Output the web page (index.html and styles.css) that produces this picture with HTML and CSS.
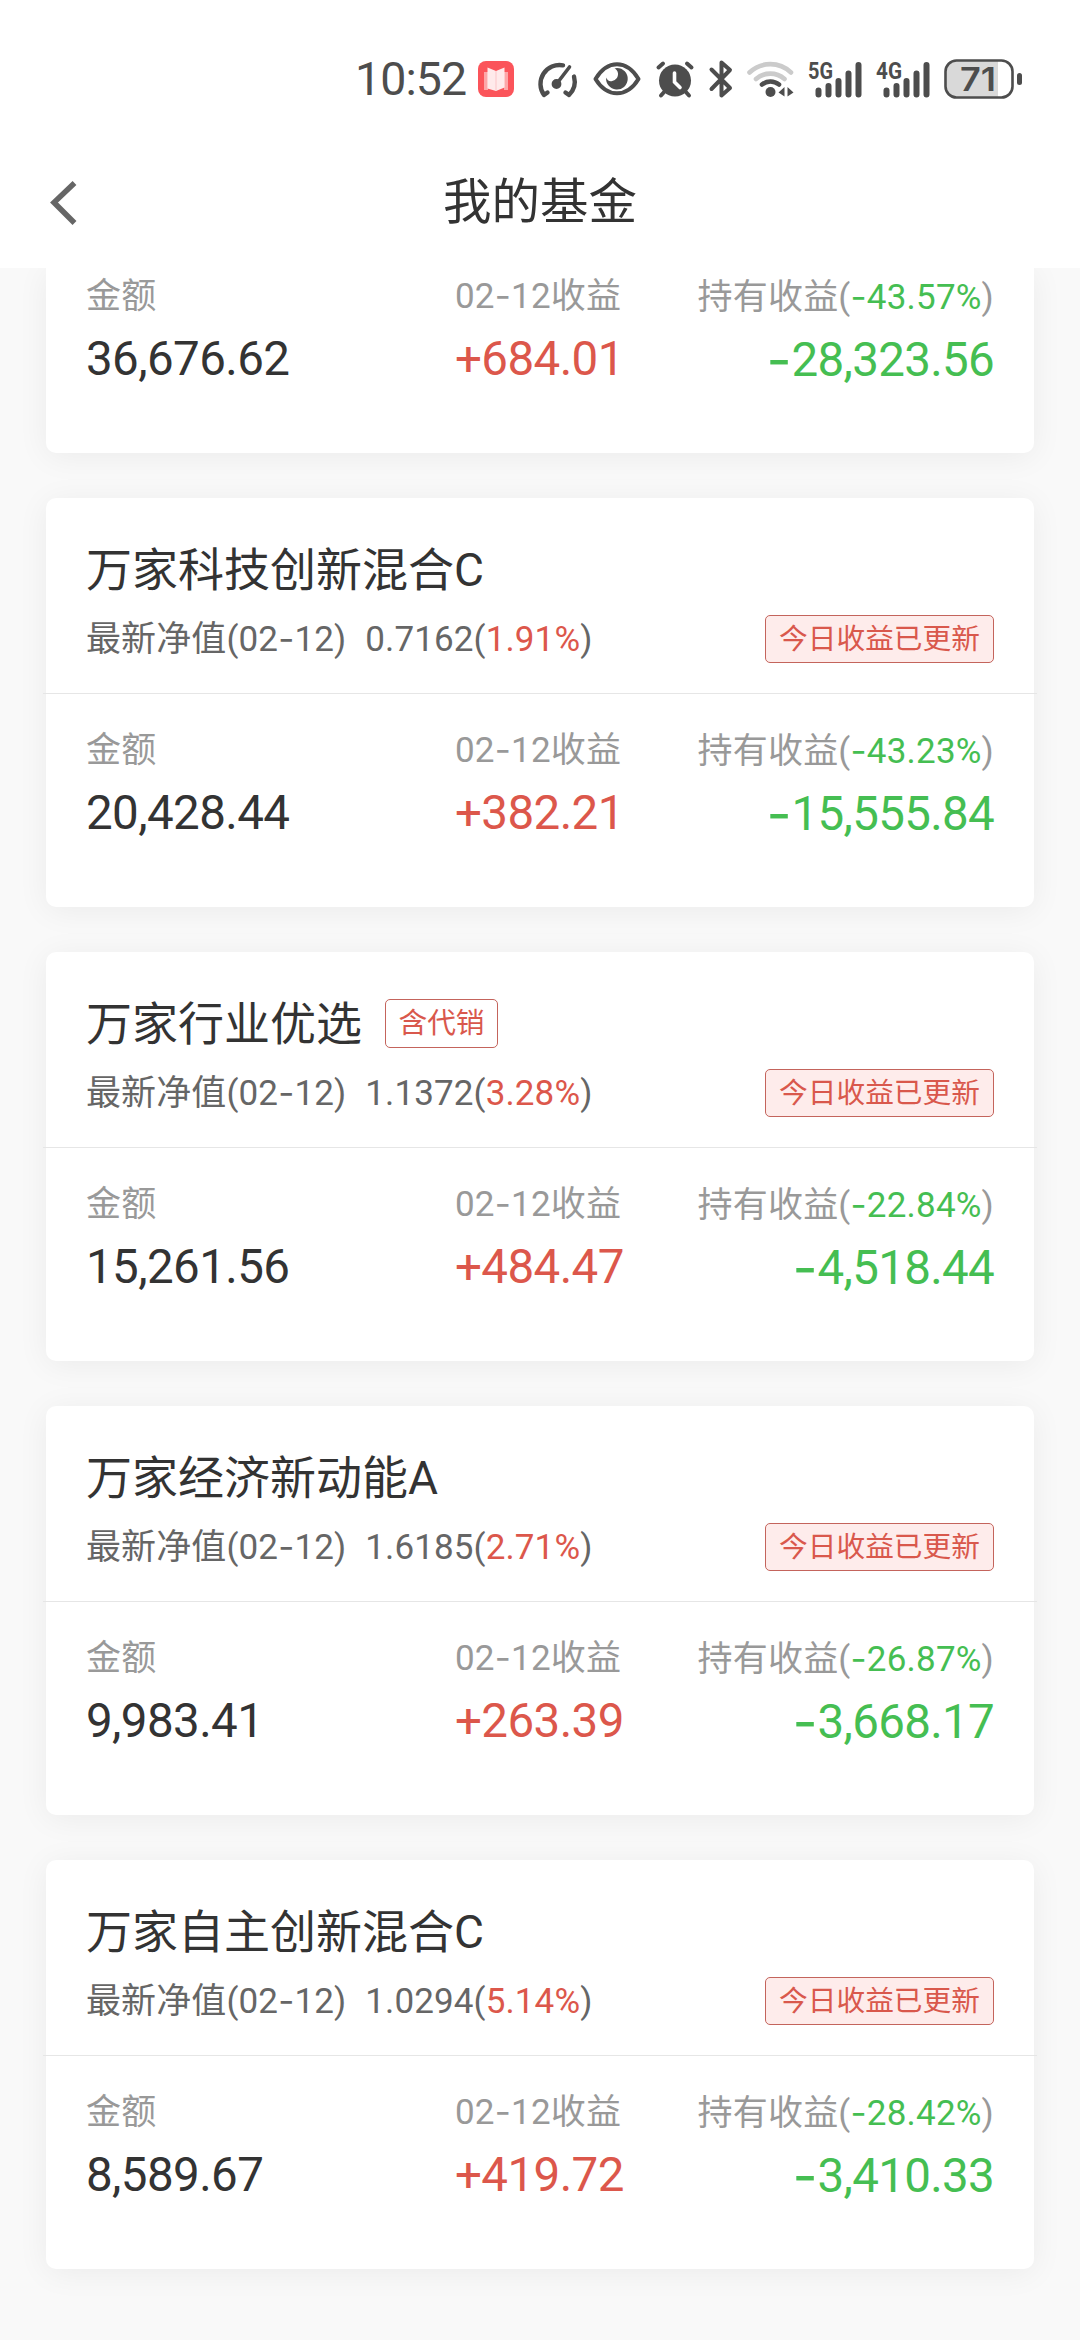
FILE: index.html
```html
<!DOCTYPE html>
<html lang="zh-CN">
<head>
<meta charset="utf-8">
<title>我的基金</title>
<link rel="stylesheet" href="styles.css">
</head>
<body>
<header class="top">
  <div class="status">
    <span class="clock">10:52</span>
    <svg class="app" width="36" height="36" viewBox="0 0 36 36"><rect width="36" height="36" rx="8" fill="#fb545a"/><path d="M6 11h4v18H6zM26 11h4v18h-4z" fill="#fda6a8"/><path d="M9.500 8.500V6.500L18 10l8.500-3.500v20L18 30l-8.500-2.500z" fill="#fff" opacity=".88"/><path d="M18 10v19" stroke="#fbc5c8" stroke-width="1"/></svg>
    <svg class="gauge" width="43" height="37" viewBox="0 0 43 37" fill="none" stroke="#4d4d4d" stroke-width="4.400" stroke-linecap="round"><path d="M28 4.300A19 19 0 0 0 9 34M9 34l3.500-2.500M34 34l-3.500-2.500M34 34a19 19 0 0 0 5-18.500"/><path d="M21.500 23L34.500 6" stroke-width="3.600"/><circle cx="21.500" cy="23" r="2.700" fill="#4d4d4d"/></svg>
    <svg class="eye" width="48" height="34" viewBox="0 0 48 34"><path d="M2.500 17C8 8 15 2.300 24 2.300S40 8 45.500 17C40 26 33 31.300 24 31.300S8 26 2.500 17z" fill="none" stroke="#4d4d4d" stroke-width="4" stroke-linejoin="round"/><path d="M24 6a10.800 10.800 0 1 1-10.800 9.500c1 3 3.300 4.200 6 3.500 4-1 6-4 5.800-7.500C24.800 9 23.500 7.500 21.500 6.500z" fill="#4d4d4d"/></svg>
    <svg class="alarm" width="38" height="37" viewBox="0 0 38 37" stroke="#4d4d4d" stroke-linecap="round"><circle cx="19" cy="19.500" r="16" fill="#4d4d4d" stroke="none"/><path d="M2.500 6.500l4.500-4M35.500 6.500l-4.500-4M9 30l-4 4.500M29 30l4 4.500" stroke-width="4"/><path d="M18.500 12v9l5.500 5.500" fill="none" stroke="#fff" stroke-width="3.600"/></svg>
    <svg class="bt" width="24" height="38" viewBox="0 0 24 38" fill="none" stroke="#4d4d4d" stroke-width="4" stroke-linecap="round" stroke-linejoin="round"><path d="M2.500 9.500L21 28l-8.500 7.500V2.500L21 10 2.500 29"/></svg>
    <svg class="wifi" width="47" height="38" viewBox="0 0 47 38" fill="none" stroke-width="4.600" stroke-linecap="round"><path d="M2.500 12.500a30 30 0 0 1 41.500 0M9 19a21.500 21.500 0 0 1 28.500 0" stroke="#cbcbcb"/><path d="M15 24.500a13.500 13.500 0 0 1 17 0" stroke="#4d4d4d"/><circle cx="23.500" cy="32" r="5" fill="#4d4d4d"/><path d="M31.500 32.500l6-5.500v9.500zM46.500 32.500l-6-5.500v9.500z" fill="#4d4d4d"/></svg>
    <svg class="sig" width="54" height="37" viewBox="0 0 54 37"><text x="0" y="18" textLength="25" lengthAdjust="spacingAndGlyphs" class="net">5G</text><g stroke="#4d4d4d" stroke-width="6" stroke-linecap="round"><path d="M10.500 29.500v4M20.500 25v8.500M30.500 20v13.500M40.500 12.500v21M50.500 4v29.500"/></g></svg>
    <svg class="sig" width="54" height="37" viewBox="0 0 54 37"><text x="0" y="18" textLength="26" lengthAdjust="spacingAndGlyphs" class="net">4G</text><g stroke="#4d4d4d" stroke-width="6" stroke-linecap="round"><path d="M10.500 29.500v4M20.500 25v8.500M30.500 20v13.500M40.500 12.500v21M50.500 4v29.500"/></g></svg>
    <svg class="bat" width="78" height="40" viewBox="0 0 78 40"><path d="M13 2h41v36H13A11 11 0 0 1 2 27V13A11 11 0 0 1 13 2z" fill="#d9d9d9"/><rect x="1.500" y="1.500" width="67" height="37" rx="11" fill="none" stroke="#4d4d4d" stroke-width="2.600"/><rect x="73" y="14" width="5" height="12" rx="2.500" fill="#4d4d4d"/><text x="16" y="32" textLength="36" lengthAdjust="spacingAndGlyphs" class="pct">71</text></svg>
  </div>
  <nav class="nav">
    <svg class="back" width="28" height="46" viewBox="0 0 28 46"><path d="M24.500 3L4 22.500 24.500 43" fill="none" stroke="#666" stroke-width="5.500"/></svg>
    <h1>我的基金</h1>
  </nav>
</header>
<main class="list">
  <section class="card cut">
    <div class="stats">
      <div><p class="label">金额</p><p class="value">36,676.62</p></div>
      <div><p class="label">02<i>-</i>12收益</p><p class="value up">+684.01</p></div>
      <div class="hold"><p class="label">持有收益(<span class="down"><i>-</i>43.57%</span>)</p><p class="value down"><i>-</i>28,323.56</p></div>
    </div>
  </section>
  <section class="card">
    <div class="head">
      <h2>万家科技创新混合C</h2>
      <div class="nav-row"><p>最新净值(02<i>-</i>12)<span class="net-value">0.7162(<span class="up">1.91%</span>)</span></p><span class="badge">今日收益已更新</span></div>
    </div>
    <div class="stats">
      <div><p class="label">金额</p><p class="value">20,428.44</p></div>
      <div><p class="label">02<i>-</i>12收益</p><p class="value up">+382.21</p></div>
      <div class="hold"><p class="label">持有收益(<span class="down"><i>-</i>43.23%</span>)</p><p class="value down"><i>-</i>15,555.84</p></div>
    </div>
  </section>
  <section class="card">
    <div class="head">
      <h2>万家行业优选<span class="tag">含代销</span></h2>
      <div class="nav-row"><p>最新净值(02<i>-</i>12)<span class="net-value">1.1372(<span class="up">3.28%</span>)</span></p><span class="badge">今日收益已更新</span></div>
    </div>
    <div class="stats">
      <div><p class="label">金额</p><p class="value">15,261.56</p></div>
      <div><p class="label">02<i>-</i>12收益</p><p class="value up">+484.47</p></div>
      <div class="hold"><p class="label">持有收益(<span class="down"><i>-</i>22.84%</span>)</p><p class="value down"><i>-</i>4,518.44</p></div>
    </div>
  </section>
  <section class="card">
    <div class="head">
      <h2>万家经济新动能A</h2>
      <div class="nav-row"><p>最新净值(02<i>-</i>12)<span class="net-value">1.6185(<span class="up">2.71%</span>)</span></p><span class="badge">今日收益已更新</span></div>
    </div>
    <div class="stats">
      <div><p class="label">金额</p><p class="value">9,983.41</p></div>
      <div><p class="label">02<i>-</i>12收益</p><p class="value up">+263.39</p></div>
      <div class="hold"><p class="label">持有收益(<span class="down"><i>-</i>26.87%</span>)</p><p class="value down"><i>-</i>3,668.17</p></div>
    </div>
  </section>
  <section class="card">
    <div class="head">
      <h2>万家自主创新混合C</h2>
      <div class="nav-row"><p>最新净值(02<i>-</i>12)<span class="net-value">1.0294(<span class="up">5.14%</span>)</span></p><span class="badge">今日收益已更新</span></div>
    </div>
    <div class="stats">
      <div><p class="label">金额</p><p class="value">8,589.67</p></div>
      <div><p class="label">02<i>-</i>12收益</p><p class="value up">+419.72</p></div>
      <div class="hold"><p class="label">持有收益(<span class="down"><i>-</i>28.42%</span>)</p><p class="value down"><i>-</i>3,410.33</p></div>
    </div>
  </section>
</main>
</body>
</html>
```

FILE: styles.css
```css
* { box-sizing: border-box; margin: 0; padding: 0; }
body {
  width: 1080px;
  height: 2340px;
  overflow: hidden;
  display: flex;
  flex-direction: column;
  background: #f9f9f9;
  color: #333;
  font-family: Roboto, "Noto Sans CJK SC", sans-serif;
}
i { font-family: Inter, sans-serif; font-style: normal; line-height: 0; }

.top { height: 268px; background: #fff; flex: none; }
.status {
  height: 134px;
  padding: 24px 0 0 355px;
  display: flex;
  align-items: center;
}
.status svg { flex: none; overflow: visible; }
.clock {
  width: 123px;
  font-size: 46.5px;
  letter-spacing: -0.9px;
  color: #4d4d4d;
}
.gauge { margin-left: 21px; }
.eye { margin-left: 15px; }
.alarm { margin-left: 15px; }
.bt { margin-left: 15px; }
.wifi { margin-left: 14px; }
.sig { margin-left: 14px; }
.bat { margin-left: 14px; }
.net { font: 700 24px Roboto, sans-serif; fill: #4d4d4d; }
.pct { font: 600 33px Inter, sans-serif; fill: #4d4d4d; }

.nav {
  height: 134px;
  display: grid;
  grid-template-columns: 200px 1fr 200px;
  align-items: center;
}
.back { margin: 4px 0 0 50px; }
.nav h1 {
  padding-bottom: 7px;
  text-align: center;
  font-size: 48.5px;
  font-weight: 400;
}

.list { flex: 1; overflow: hidden; }
.card {
  width: 988px;
  height: 409px;
  margin: 0 auto 45px;
  background: #fff;
  border-radius: 10px;
  box-shadow: 0 4px 32px rgba(0, 0, 0, 0.06);
}
.cut { height: 185px; border-radius: 0 0 10px 10px; }
.head {
  height: 196px;
  margin: 0 -3px;
  padding: 38px 43px 0;
  border-bottom: 1px solid #e6e6e6;
}
.head h2 {
  height: 60px;
  display: flex;
  align-items: center;
  font-size: 46px;
  font-weight: 400;
}
.tag, .badge {
  border: 1px solid #c4645c;
  border-radius: 5px;
  color: #d9584c;
  font-size: 28.7px;
  line-height: 46px;
  text-align: center;
}
.tag { width: 113px; height: 49px; margin: 6px 0 0 23px; }
.badge { width: 229px; height: 48px; margin-top: 7px; background: #feeceb; }
.nav-row {
  height: 50px;
  margin-top: 14px;
  display: flex;
  align-items: center;
  justify-content: space-between;
  font-size: 35px;
  letter-spacing: 0.12px;
  color: #666;
}
.badge { letter-spacing: 0; }
.net-value { margin-left: 19px; }

.stats {
  padding: 33px 40px 0;
  display: grid;
  grid-template-columns: 369px 1fr auto;
}
.cut .stats { padding-top: 5px; }
.label {
  height: 48px;
  line-height: 48px;
  font-size: 35px;
  letter-spacing: 0.2px;
  color: #999;
}
.value {
  height: 56px;
  margin-top: 10px;
  line-height: 56px;
  font-size: 47.5px;
  letter-spacing: -0.6px;
}
.value i { font-size: 1.15em; letter-spacing: 0; vertical-align: -3px; }
.hold { text-align: right; padding-top: 1px; }
.hold .value { letter-spacing: -0.7px; }
.up { color: #dc574b; }
.down { color: #45be52; }
```
